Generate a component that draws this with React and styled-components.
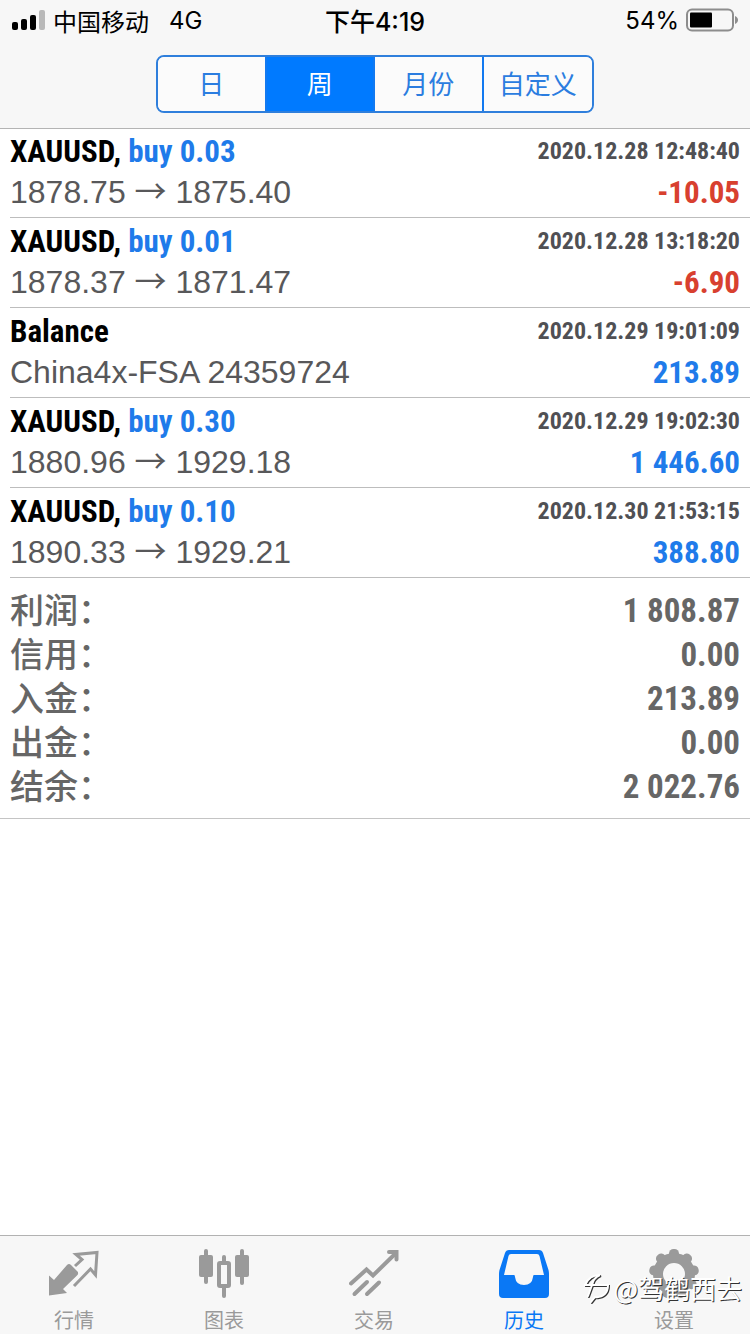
import React from 'react';
import styled, { createGlobalStyle } from 'styled-components';

const sans = '"Liberation Sans", "Noto Sans CJK SC", sans-serif';
const narrow = '"Roboto Condensed", "Liberation Sans Narrow", "Liberation Sans", "Noto Sans CJK SC", sans-serif';
const system = 'Inter, "Noto Sans CJK SC", sans-serif';

const GlobalStyle = createGlobalStyle`
  * { box-sizing: border-box; }
  body { margin: 0; background: #fff; font-family: ${sans}; }
  ul, dl, dd, p, h2 { margin: 0; padding: 0; list-style: none; }
`;

const Page = styled.div`
  display: flex;
  flex-direction: column;
  min-height: 100vh;
`;

const Header = styled.header`
  display: flex;
  flex-direction: column;
  align-items: center;
  gap: 15px;
  height: 128px;
  background: #f7f7f7;
  box-shadow: 0 1px 0 #b4b4b4;
`;

const StatusBar = styled.div`
  display: grid;
  grid-template-columns: 1fr auto 1fr;
  align-items: center;
  width: 100%;
  height: 40px;
  padding: 0 11px;
  font-family: ${system};
  font-size: 24px;
  color: #000;
`;

const StatusGroup = styled.div`
  display: flex;
  align-items: center;
  gap: ${(p) => p.$gap}px;
  justify-content: ${(p) => (p.$end ? 'flex-end' : 'flex-start')};
`;

const Network = styled.span`
  margin-left: 12px;
`;

const Time = styled.time`
  font-size: 25px;
  font-weight: 500;
`;

const Segmented = styled.div`
  display: grid;
  grid-template-columns: repeat(4, 1fr);
  width: 438px;
  max-width: 100%;
  height: 58px;
  border: 2px solid #2f7fdc;
  border-radius: 8px;
  overflow: hidden;
`;

const Segment = styled.button`
  border: 0;
  border-right: ${(p) => (p.$last ? '0' : '2px solid #1279f0')};
  padding: 0 0 4px;
  background: ${(p) => (p.$active ? '#007aff' : '#fbfbfb')};
  color: ${(p) => (p.$active ? '#fff' : '#2b7de0')};
  font-family: ${sans};
  font-size: 26px;
`;

const Content = styled.main`
  flex: 1;
`;

const Deal = styled.li`
  margin-left: 10px;
  height: 90px;
  padding: 4px 10px 0 0;
  border-bottom: 1px solid #bdbdbd;
`;

const Line = styled.div`
  display: flex;
  align-items: center;
  justify-content: space-between;
  height: ${(p) => p.$height}px;
  white-space: nowrap;
`;

const Symbol = styled.h2`
  font: bold 31px ${narrow};
  color: #000;
`;

const Side = styled.span`
  color: #1f7bea;
`;

const DealTime = styled.time`
  font: bold 24px ${narrow};
  color: #505054;
`;

const Price = styled.p`
  font-size: 32px;
  color: #58585a;
`;

const Arrow = styled.span`
  font-family: "Noto Sans CJK SC", sans-serif;
  line-height: 1;
`;

const Amount = styled.strong`
  font: bold 31px ${narrow};
  color: ${(p) => (p.$loss ? '#d8402f' : '#1f7bea')};
`;

const Totals = styled.dl`
  padding: 10px;
  border-bottom: 1px solid #c4c4c4;
`;

const TotalRow = styled.div`
  display: flex;
  align-items: center;
  justify-content: space-between;
  height: 44px;
  color: #666;
`;

const TotalLabel = styled.dt`
  padding-bottom: 2px;
  font: 500 34px/42px "Noto Sans CJK SC", sans-serif;
`;

const TotalValue = styled.dd`
  font: bold 33px ${narrow};
`;

const TabBar = styled.nav`
  position: sticky;
  bottom: 0;
  display: grid;
  grid-template-columns: repeat(5, 1fr);
  height: 99px;
  border-top: 1px solid #b2b2b2;
  background: #f7f7f7;
`;

const Tab = styled.a`
  display: flex;
  flex-direction: column;
  align-items: center;
  gap: 9px;
  padding: 13px 2px 0 0;
  color: ${(p) => (p.$active ? '#0a78f5' : '#9a9a9a')};
  font-size: 20px;
  line-height: 26px;
  text-decoration: none;
`;

const Watermark = styled.div`
  position: absolute;
  right: 8px;
  bottom: 28px;
  display: flex;
  align-items: center;
  gap: 2px;
  color: #fff;
  font: 26px/36px "Noto Sans CJK SC", sans-serif;
  text-shadow: 1px 1px 0 #333;
  pointer-events: none;

  svg { filter: drop-shadow(1px 1px 0 #333); }
`;

const SignalIcon = () => (
  <svg width="34" height="22" viewBox="0 0 34 22" aria-hidden="true">
    <rect x="1" y="13" width="6" height="8" rx="2" />
    <rect x="10" y="10" width="6" height="11" rx="2" />
    <rect x="19" y="6" width="6" height="15" rx="2" />
    <rect x="28" y="1" width="6" height="20" rx="2" fill="#b9b9b9" />
  </svg>
);

const BatteryIcon = () => (
  <svg width="54" height="24" viewBox="0 0 54 24" aria-hidden="true">
    <rect x="2" y="1.5" width="46" height="21" rx="5" fill="none" stroke="#8d8d8d" strokeWidth="2" />
    <rect x="5" y="4.5" width="22" height="15" rx="1" />
    <path d="M50 8c4 1.500 4 6.500 0 8z" fill="#8d8d8d" />
  </svg>
);

const QuotesIcon = () => (
  <svg width="50" height="50" viewBox="0 0 50 50" aria-hidden="true">
    <path fill="currentColor" d="M0 26.500 5 31 18 16Q20 14 22 16L28.500 22.500Q30 24.500 28 26.500L14 40 18 44 0 46.500z" />
    <path fill="none" stroke="currentColor" strokeWidth="3" d="M26 17 33 10.500 27 5.500 48 3.500 46.500 26 41.500 20 25 37" />
  </svg>
);

const ChartIcon = () => (
  <svg width="50" height="50" viewBox="0 0 50 50" aria-hidden="true">
    <g fill="currentColor">
      <rect x="0" y="6" width="14" height="22" rx="2" />
      <rect x="5" y="0" width="4" height="35" rx="2" />
      <rect x="36" y="6" width="14" height="22" rx="2" />
      <rect x="41" y="0" width="4" height="36" rx="2" />
      <rect x="23" y="6" width="4" height="9" rx="2" />
      <rect x="23" y="36" width="4" height="13" rx="2" />
    </g>
    <rect x="20" y="14" width="10" height="23" rx="1" fill="none" stroke="currentColor" strokeWidth="4" />
  </svg>
);

const TradeIcon = () => (
  <svg width="50" height="50" viewBox="0 0 50 50" aria-hidden="true">
    <g fill="none" stroke="currentColor" strokeWidth="4" strokeLinecap="round">
      <path d="M2 34.500 17.500 20.500 24 26.500 47 4" />
      <path d="M40 3H47.500V10.500" />
      <path d="M5.500 45 18 33M18 45 30 33.500" />
    </g>
  </svg>
);

const HistoryIcon = () => (
  <svg width="50" height="50" viewBox="0 0 50 50" aria-hidden="true">
    <path fill="currentColor" fillRule="evenodd" d="M10 1H40Q43 1 44 4L49.500 21Q50 23 50 25V45Q50 49 46 49H4Q0 49 0 45V25Q0 23 .5 21L6 4Q7 1 10 1zM12 5Q10 5 9.500 7L5 26H15Q16 26 16 28Q17 36 25 36Q33 36 34 28Q34 26 35 26H45L40.500 7Q40 5 38 5z" />
  </svg>
);

const teeth = [0, 40, 80, 120, 160, 200, 240, 280, 320];

const SettingsIcon = () => (
  <svg width="50" height="50" viewBox="0 0 50 50" aria-hidden="true">
    <g fill="currentColor">
      {teeth.map((angle) => (
        <rect key={angle} x="20" y="0" width="10" height="12" rx="4.500" transform={`rotate(${angle} 25 25)`} />
      ))}
    </g>
    <circle cx="25" cy="25" r="16" fill="none" stroke="currentColor" strokeWidth="10" />
  </svg>
);

const WatermarkIcon = () => (
  <svg width="28" height="34" viewBox="0 0 28 34" aria-hidden="true">
    <g fill="none" stroke="#fff" strokeWidth="2" strokeLinecap="round">
      <path d="M2 14C5 7 10 4 17 4C12 6 10 9 9 14L5 25" />
      <path d="M2 14H25C25 22 20 27 12 26L8 31" />
    </g>
  </svg>
);

const periods = ['日', '周', '月份', '自定义'];

const deals = [
  { symbol: 'XAUUSD', side: 'buy 0.03', time: '2020.12.28 12:48:40', from: '1878.75', to: '1875.40', amount: '-10.05' },
  { symbol: 'XAUUSD', side: 'buy 0.01', time: '2020.12.28 13:18:20', from: '1878.37', to: '1871.47', amount: '-6.90' },
  { symbol: 'Balance', time: '2020.12.29 19:01:09', note: 'China4x-FSA 24359724', amount: '213.89' },
  { symbol: 'XAUUSD', side: 'buy 0.30', time: '2020.12.29 19:02:30', from: '1880.96', to: '1929.18', amount: '1 446.60' },
  { symbol: 'XAUUSD', side: 'buy 0.10', time: '2020.12.30 21:53:15', from: '1890.33', to: '1929.21', amount: '388.80' },
];

const totals = [
  ['利润：', '1 808.87'],
  ['信用：', '0.00'],
  ['入金：', '213.89'],
  ['出金：', '0.00'],
  ['结余：', '2 022.76'],
];

const tabs = [
  { label: '行情', Icon: QuotesIcon },
  { label: '图表', Icon: ChartIcon },
  { label: '交易', Icon: TradeIcon },
  { label: '历史', Icon: HistoryIcon, active: true },
  { label: '设置', Icon: SettingsIcon },
];

export default function App() {
  return (
    <Page>
      <GlobalStyle />
      <Header>
        <StatusBar>
          <StatusGroup $gap={8}>
            <SignalIcon />
            <span>中国移动</span>
            <Network>4G</Network>
          </StatusGroup>
          <Time>下午4:19</Time>
          <StatusGroup $gap={6} $end>
            <span>54%</span>
            <BatteryIcon />
          </StatusGroup>
        </StatusBar>
        <Segmented>
          {periods.map((label, i) => (
            <Segment key={label} type="button" $last={i === periods.length - 1} $active={i === 1} aria-pressed={i === 1}>
              {label}
            </Segment>
          ))}
        </Segmented>
      </Header>
      <Content>
        <ul>
          {deals.map((deal) => (
            <Deal key={deal.time}>
              <Line $height={38}>
                <Symbol>
                  {deal.symbol}
                  {deal.side && <>, <Side>{deal.side}</Side></>}
                </Symbol>
                <DealTime>{deal.time}</DealTime>
              </Line>
              <Line $height={44}>
                <Price>{deal.note || <>{deal.from} <Arrow>→</Arrow> {deal.to}</>}</Price>
                <Amount $loss={deal.amount.startsWith('-')}>{deal.amount}</Amount>
              </Line>
            </Deal>
          ))}
        </ul>
        <Totals>
          {totals.map(([label, value]) => (
            <TotalRow key={label}>
              <TotalLabel>{label}</TotalLabel>
              <TotalValue>{value}</TotalValue>
            </TotalRow>
          ))}
        </Totals>
      </Content>
      <TabBar>
        {tabs.map(({ label, Icon, active }) => (
          <Tab key={label} href="#" $active={active} aria-current={active ? 'page' : undefined}>
            <Icon />
            {label}
          </Tab>
        ))}
        <Watermark>
          <WatermarkIcon />
          @驾鹤西去
        </Watermark>
      </TabBar>
    </Page>
  );
}
